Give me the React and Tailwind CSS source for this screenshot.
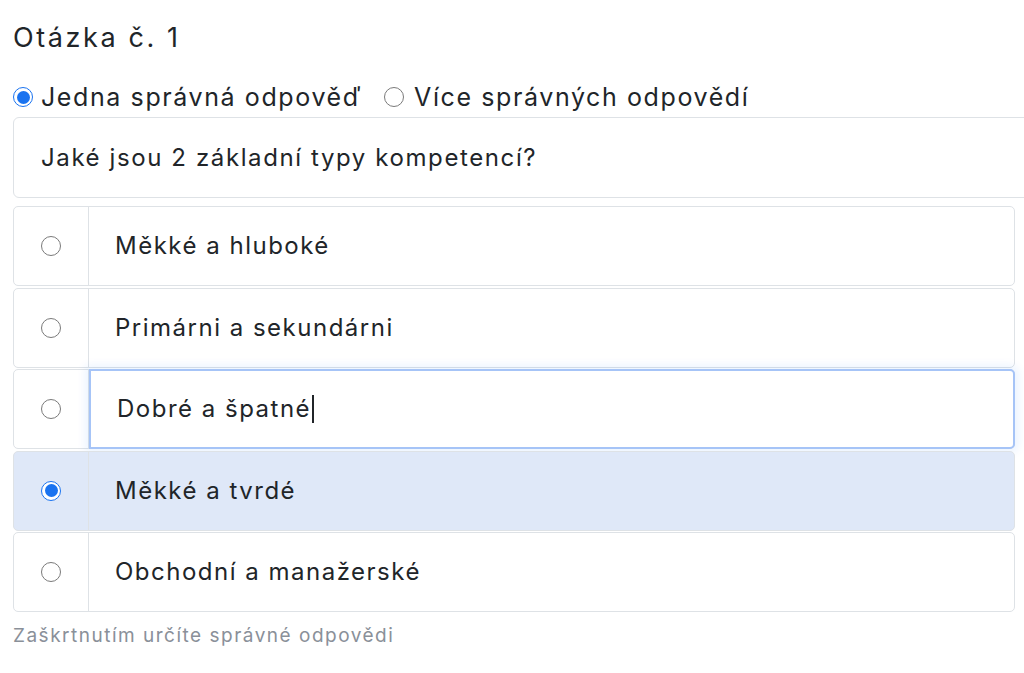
import React, { useState } from "react";

const answers = [
  "Měkké a hluboké",
  "Primárni a sekundárni",
  "Dobré a špatné",
  "Měkké a tvrdé",
  "Obchodní a manažerské",
];

function Radio({ checked }) {
  return (
    <span
      className={
        "flex h-[20px] w-[20px] items-center justify-center rounded-full border " +
        (checked ? "border-[#1a73f0] bg-white" : "border-[#7a7a7a] bg-white")
      }
    >
      {checked && <span className="block h-[13px] w-[13px] rounded-full bg-[#1a73f0]" />}
    </span>
  );
}

export default function App() {
  const [mode] = useState("single");
  const [picked] = useState(3);
  const focused = 2;

  return (
    <div
      className="min-h-screen overflow-hidden bg-white pl-[13px] pt-[20px] text-[#212529]"
      style={{ fontFamily: "Inter, 'Noto Sans', sans-serif" }}
    >
      <h2 className="text-[27px] leading-[36px] font-normal tracking-[2.6px]">Otázka č. 1</h2>

      <div className="mt-[26px] flex items-center text-[25px] leading-[30px] tracking-[1.6px]">
        <Radio checked={mode === "single"} />
        <span className="ml-[8px]">Jedna správná odpověď</span>
        <span className="ml-[22px]">
          <Radio checked={mode === "multi"} />
        </span>
        <span className="ml-[10px]">Více správných odpovědí</span>
      </div>

      <div className="mt-[5px] flex h-[81px] w-[1030px] items-center rounded-l-[6px] border border-[#dee2e6] pl-[27px] text-[24px] tracking-[1.6px]">
        Jaké jsou 2 základní typy kompetencí?
      </div>

      <div className="mt-[8px] flex w-[1002px] flex-col gap-[1.5px]">
        {answers.map((a, i) => {
          const sel = picked === i;
          return (
            <div
              key={a}
              className={
                "flex h-[80px] rounded-[5px] border border-[#dee2e6] " +
                (sel ? "bg-[#dfe8f8]" : "bg-white")
              }
            >
              <div className="flex w-[75px] shrink-0 items-center justify-center border-r border-[#dee2e6]">
                <Radio checked={sel} />
              </div>
              <div
                className={
                  "flex flex-1 items-center pl-[26px] text-[24px] tracking-[1.5px] " +
                  (i === focused
                    ? "-my-px -mr-px rounded-r-[5px] border-2 border-[#a6c4f7] bg-white pl-[25px] shadow-[0_0_8px_4px_rgba(13,110,253,0.08)]"
                    : "")
                }
              >
                {a}
                {i === focused && <span className="ml-[1px] inline-block h-[28px] w-[1.5px] bg-[#212529]" />}
              </div>
            </div>
          );
        })}
      </div>

      <p className="mt-[10px] text-[19px] tracking-[1.5px] text-[#8a9099]">Zaškrtnutím určíte správné odpovědi</p>
    </div>
  );
}
